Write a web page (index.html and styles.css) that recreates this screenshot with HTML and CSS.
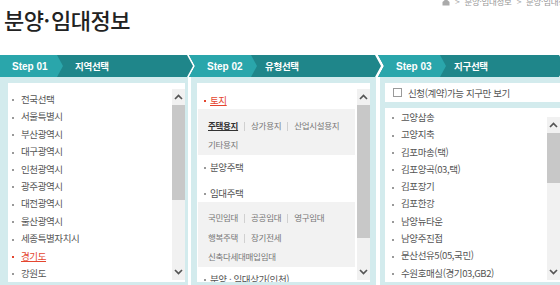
FILE: index.html
```html
<!DOCTYPE html>
<html lang="ko">
<head>
<meta charset="utf-8">
<title>분양·임대정보</title>
<link rel="stylesheet" href="styles.css">
</head>
<body>
<div class="page">
  <header class="top">
    <h1 class="title">분양<span class="dot">·</span>임대정보</h1>
    <nav class="crumb"><svg class="home" width="8" height="8" viewBox="0 0 8 8"><path d="M0.5 4 L4 0.8 L7.5 4 V7.5 H0.5 Z" fill="#aaa"/></svg><span class="sep">&gt;</span>분양·임대정보<span class="sep">&gt;</span>분양·임대정보</nav>
  </header>

  <div class="steps">
    <section class="panel p1">
      <div class="head"><span class="step">Step 01</span><span class="name">지역선택</span></div>
      <div class="body">
        <div class="box">
          <ul class="list">
            <li>전국선택</li>
            <li>서울특별시</li>
            <li>부산광역시</li>
            <li>대구광역시</li>
            <li>인천광역시</li>
            <li>광주광역시</li>
            <li>대전광역시</li>
            <li>울산광역시</li>
            <li>세종특별자치시</li>
            <li class="on"><span>경기도</span></li>
            <li>강원도</li>
            <li>충청북도</li>
          </ul>
          <div class="sbar">
            <span class="btn"><svg width="9" height="6" viewBox="0 0 9 6"><path d="M1 5 L4.5 1.5 L8 5" fill="none" stroke="#555" stroke-width="1.7"/></svg></span>
            <span class="track"><span class="thumb t1"></span></span>
            <span class="btn"><svg width="9" height="6" viewBox="0 0 9 6"><path d="M1 1 L4.5 4.5 L8 1" fill="none" stroke="#555" stroke-width="1.7"/></svg></span>
          </div>
        </div>
      </div>
    </section>

    <section class="panel p2">
      <div class="head"><span class="step">Step 02</span><span class="name">유형선택</span></div>
      <div class="body">
        <div class="box">
          <div class="tree">
            <div class="item on"><span>토지</span></div>
            <div class="sub">
              <div class="row"><b class="cur">주택용지</b><i class="bar"></i>상가용지<i class="bar"></i>산업시설용지</div>
              <div class="row">기타용지</div>
            </div>
            <div class="item">분양주택</div>
            <div class="item">임대주택</div>
            <div class="sub">
              <div class="row">국민임대<i class="bar"></i>공공임대<i class="bar"></i>영구임대</div>
              <div class="row">행복주택<i class="bar"></i>장기전세</div>
              <div class="row">신축다세대매입임대</div>
            </div>
            <div class="item">분양 · 임대상가(인천)</div>
          </div>
          <div class="sbar">
            <span class="btn"><svg width="9" height="6" viewBox="0 0 9 6"><path d="M1 5 L4.5 1.5 L8 5" fill="none" stroke="#555" stroke-width="1.7"/></svg></span>
            <span class="track"><span class="thumb t2"></span></span>
            <span class="btn"><svg width="9" height="6" viewBox="0 0 9 6"><path d="M1 1 L4.5 4.5 L8 1" fill="none" stroke="#555" stroke-width="1.7"/></svg></span>
          </div>
        </div>
      </div>
    </section>

    <section class="panel p3">
      <div class="head"><span class="step">Step 03</span><span class="name">지구선택</span></div>
      <div class="body">
        <label class="check"><span class="cb"></span>신청(계약)가능 지구만 보기</label>
        <div class="box">
          <ul class="list">
            <li>고양삼송</li>
            <li>고양지축</li>
            <li>김포마송(택)</li>
            <li>김포양곡(03,택)</li>
            <li>김포장기</li>
            <li>김포한강</li>
            <li>남양뉴타운</li>
            <li>남양주진접</li>
            <li>문산선유5(05,국민)</li>
            <li>수원호매실(경기03,GB2)</li>
            <li>시흥목감</li>
          </ul>
          <div class="sbar">
            <span class="btn"><svg width="9" height="6" viewBox="0 0 9 6"><path d="M1 5 L4.5 1.5 L8 5" fill="none" stroke="#555" stroke-width="1.7"/></svg></span>
            <span class="track"><span class="thumb t3"></span></span>
            <span class="btn"><svg width="9" height="6" viewBox="0 0 9 6"><path d="M1 1 L4.5 4.5 L8 1" fill="none" stroke="#555" stroke-width="1.7"/></svg></span>
          </div>
        </div>
      </div>
    </section>
  </div>
</div>
</body>
</html>
```

FILE: styles.css
```css
* { box-sizing: border-box; }
html, body { margin: 0; overflow: hidden; background: #fff; }
body { font-family: "Noto Sans CJK KR", sans-serif; color: #555; }

.page { width: 560px; height: 285px; overflow: hidden; }

.top { display: flex; justify-content: space-between; height: 55px; }
.title {
  margin: 0;
  padding: 4px 0 0 4px;
  font-size: 22px;
  line-height: 30px;
  font-weight: 500;
  letter-spacing: -0.5px;
  color: #222;
  white-space: nowrap;
}
.title .dot { letter-spacing: 0; margin: 0 1px 0 0; }
.crumb {
  width: 118px;
  margin-top: -4px;
  height: 10px;
  font-size: 8.5px;
  line-height: 10px;
  color: #999;
  white-space: nowrap;
  overflow: hidden;
  letter-spacing: -0.3px;
}
.crumb .home { vertical-align: -1px; }
.crumb .sep { margin: 0 5px; color: #aaa; }

.steps { display: flex; }
.panel { display: flex; flex-direction: column; height: 230px; }
.p1 { width: 188px; }
.p2 { width: 185px; margin-left: 3px; }
.p3 { flex: 1; min-width: 0; margin-left: 4px; }

.head {
  height: 22px;
  flex: none;
  display: flex;
  align-items: center;
  background: #1f868a;
  color: #fff;
  font-weight: 700;
  margin-right: -5px;
  margin-left: -2px;
  clip-path: polygon(0 0, calc(100% - 6px) 0, 100% 50%, calc(100% - 6px) 100%, 0 100%, 6px 50%);
}
.p1 .head {
  margin-left: 0;
  clip-path: polygon(0 0, calc(100% - 6px) 0, 100% 50%, calc(100% - 6px) 100%, 0 100%);
}
.step {
  height: 100%;
  display: flex;
  align-items: center;
  background: #2aa6ab;
  font-family: "Liberation Sans", sans-serif;
  font-size: 10px;
  width: 68px;
  padding-left: 18px;
  clip-path: polygon(0 0, calc(100% - 6px) 0, 100% 50%, calc(100% - 6px) 100%, 0 100%);
}
.p1 .step { width: 63px; padding-left: 12px; }
.name { font-size: 9.5px; letter-spacing: -0.3px; margin-left: 8px; }
.p1 .name { margin-left: 12px; }

.body {
  flex: 1;
  min-height: 0;
  display: flex;
  flex-direction: column;
  gap: 6px;
  background: #d3ebed;
  padding: 6px 3px 3px 8px;
}
.p2 .body { padding: 6px 6px 3px 6px; }
.p3 .body { padding: 6px 0 3px 5px; }

.box { flex: 1; min-height: 0; display: flex; background: #fff; }

.check {
  height: 19px;
  flex: none;
  display: flex;
  align-items: center;
  background: #fff;
  padding-left: 8px;
  font-size: 9.5px;
  letter-spacing: -0.4px;
  color: #555;
  white-space: nowrap;
}
.check .cb { width: 9px; height: 9px; border: 1px solid #9a9a9a; background: #fff; margin-right: 6px; }

.list {
  flex: 1;
  min-width: 0;
  list-style: none;
  margin: 0;
  padding: 8px 0 0 0;
  overflow: hidden;
  font-size: 9.5px;
  line-height: 17.4px;
  letter-spacing: -0.4px;
  white-space: nowrap;
}
.list li { padding-left: 4px; }
.list li::before {
  content: "";
  display: inline-block;
  width: 2px;
  height: 2px;
  background: #999;
  margin-right: 7px;
  vertical-align: middle;
}
.p3 .list { padding-top: 1px; line-height: 17.3px; }
.p3 .list li { padding-left: 7px; }

.on { color: #e4462f; }
.on span { text-decoration: underline; }
.list li.on::before, .item.on::before { background: #e4462f; }

.tree {
  flex: 1;
  min-width: 0;
  padding-top: 8px;
  overflow: hidden;
  font-size: 9.5px;
  letter-spacing: -0.4px;
  white-space: nowrap;
}
.item { line-height: 18px; padding-left: 7px; }
.item::before {
  content: "";
  display: inline-block;
  width: 2px;
  height: 2px;
  background: #999;
  margin-right: 4px;
  vertical-align: middle;
}
.item + .item { margin-top: 8px; }
.sub {
  background: #f2f2f2;
  margin: 0 2px 3px 1px;
  padding: 6.5px 0 0 10px;
  font-size: 8.5px;
  letter-spacing: -0.3px;
  color: #777;
}
.row { line-height: 19.5px; }
.bar {
  display: inline-block;
  width: 1px;
  height: 9px;
  background: #d0d0d0;
  margin: 0 6px;
  vertical-align: middle;
}
.cur { color: #333; font-weight: 700; text-decoration: underline; }

.sbar {
  width: 13px;
  flex: none;
  display: flex;
  flex-direction: column;
  margin: 6px 0 2px;
  background: #f1f1f1;
}
.p3 .sbar { margin-top: 9px; }
.btn { height: 16px; flex: none; display: flex; align-items: center; justify-content: center; }
.track { flex: 1; display: block; }
.thumb { display: block; background: #c8c8c8; }
.t1 { height: 95px; }
.t2 { height: 133px; }
.t3 { height: 50px; }
```
